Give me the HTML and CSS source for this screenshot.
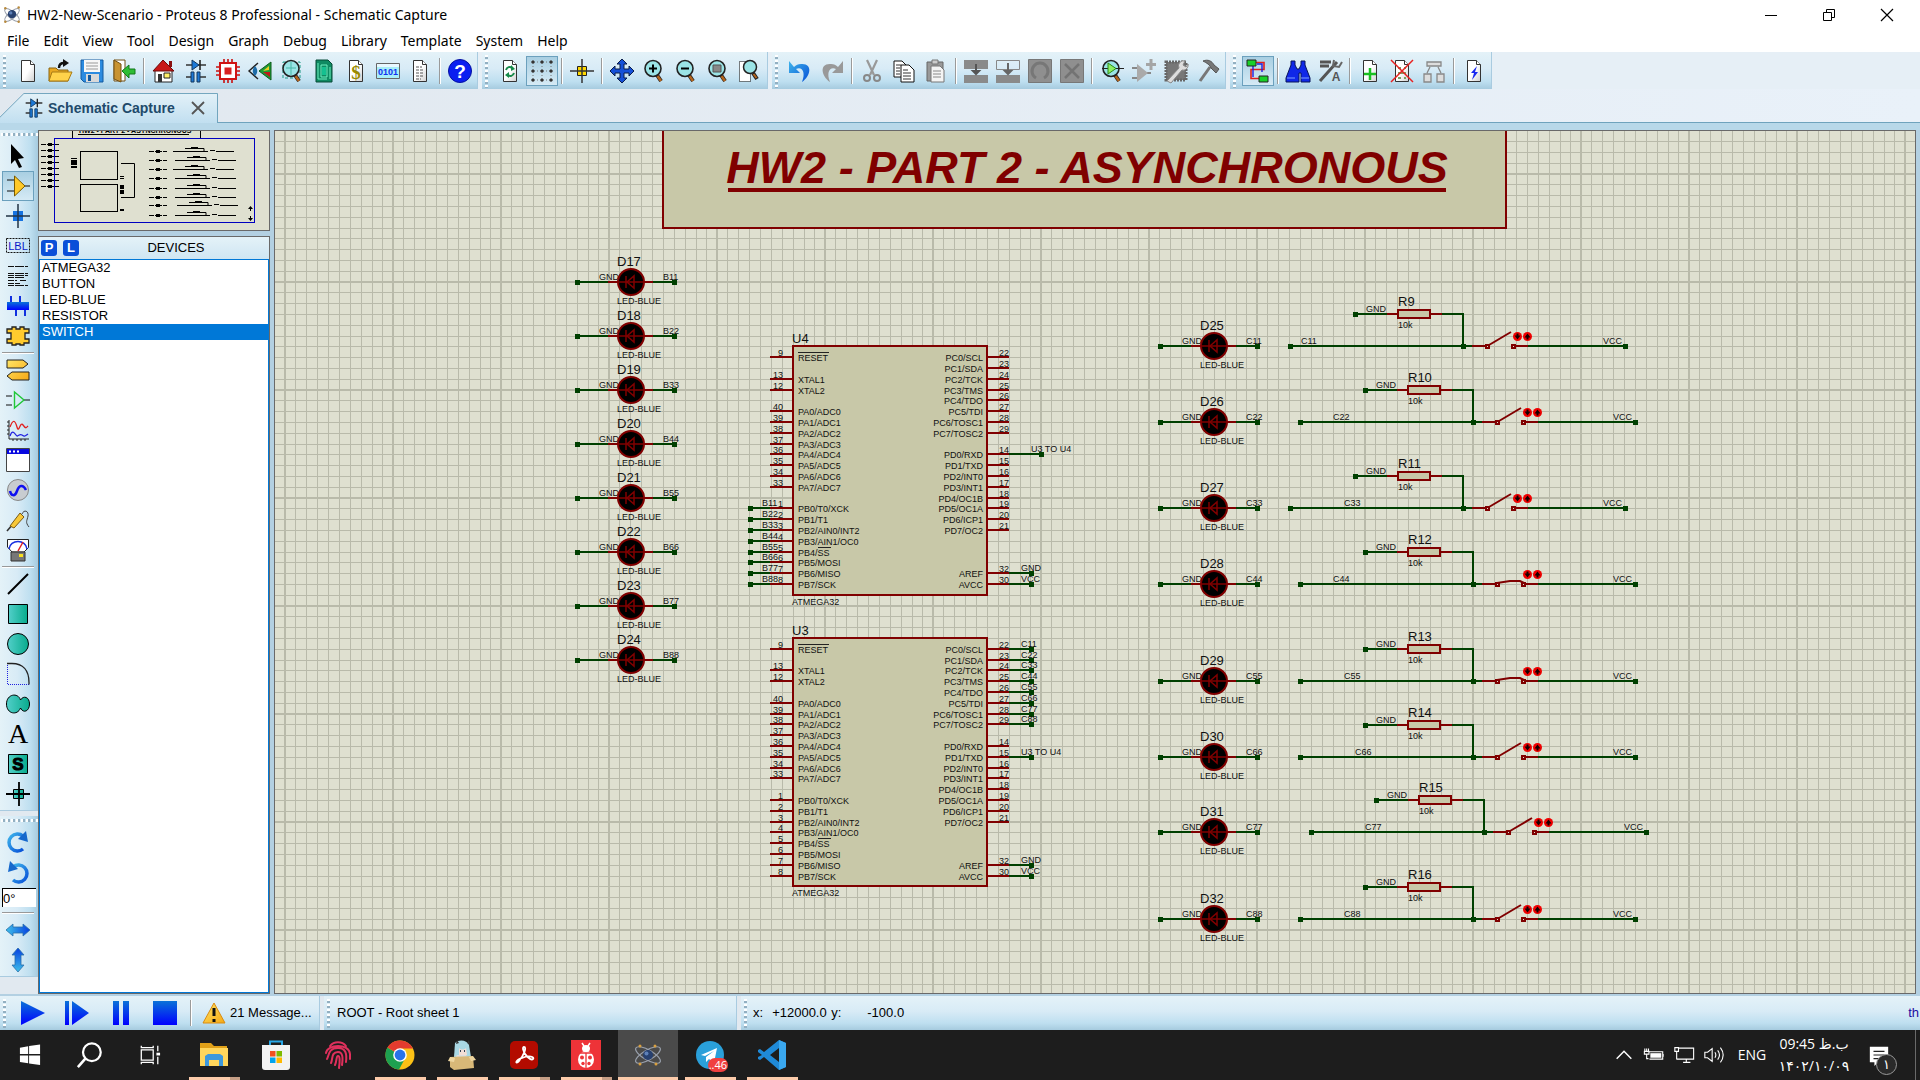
FILE: index.html
```html
<!DOCTYPE html>
<html lang="en">
<head>
<meta charset="utf-8">
<title>HW2-New-Scenario - Proteus 8 Professional - Schematic Capture</title>
<link rel="stylesheet" href="styles.css">
</head>
<body>
<svg class="defs" aria-hidden="true">
  <defs>
    <linearGradient id="blueDown" x1="0" y1="0" x2="0" y2="1"><stop offset="0" stop-color="#0a72d8"/><stop offset="1" stop-color="#0000ff"/></linearGradient>
    <linearGradient id="blueArc" x1="0" y1="0" x2="1" y2="1"><stop offset="0" stop-color="#3fb4ea"/><stop offset="1" stop-color="#0650d8"/></linearGradient>
    <linearGradient id="blueAcross" x1="0" y1="0" x2="1" y2="0"><stop offset="0" stop-color="#3fc0ea"/><stop offset="1" stop-color="#0640e0"/></linearGradient>
    <linearGradient id="blueUp" x1="0" y1="1" x2="0" y2="0"><stop offset="0" stop-color="#3fc0ea"/><stop offset="1" stop-color="#0640e0"/></linearGradient>
    <linearGradient id="teal" x1="0" y1="0" x2="1" y2="0"><stop offset="0" stop-color="#52cfc9"/><stop offset="1" stop-color="#08ab8d"/></linearGradient>
    <linearGradient id="gold" x1="0" y1="0" x2="1" y2="1"><stop offset="0" stop-color="#ffe566"/><stop offset="1" stop-color="#f5a814"/></linearGradient>
    <linearGradient id="paper" x1="0" y1="0" x2="1" y2="1"><stop offset="0.5" stop-color="#fff"/><stop offset="1" stop-color="#cfcfcf"/></linearGradient>
    <linearGradient id="tabFill" x1="0" y1="0" x2="0" y2="1"><stop offset="0" stop-color="#e3f1f8"/><stop offset="1" stop-color="#c1dff0"/></linearGradient>
    <symbol id="sheet" viewBox="0 0 24 24"><path d="M5.500 1.500h9l4 4v17h-13z" fill="url(#paper)" stroke="#333"/><path d="M14.500 1.500v4h4" fill="#fff" stroke="#333"/></symbol>
    <symbol id="lens" viewBox="0 0 24 24"><path d="M15 16l4 6" stroke="#222" stroke-width="4"/><path d="M15.500 17l3.500 5" stroke="#b5651d" stroke-width="2.500"/><circle cx="11" cy="9.500" r="8" fill="#9be4e6" stroke="#222" stroke-width="1.600"/></symbol>
    <symbol id="caps" viewBox="0 0 24 24"><path d="M2 6h20M2 18h6M16 18h6" stroke="#333" stroke-width="1.600"/><path d="M8 1v10l7-5z" fill="#1b78d6" stroke="#12365c"/><path d="M16 1v10" stroke="#222" stroke-width="1.600"/><path d="M7 13h3v10H7zM13 13h3v10h-3z" fill="#1b78d6" stroke="#12365c"/></symbol>
    <symbol id="atom" viewBox="0 0 24 24"><g fill="none" stroke="#9aa1ad" stroke-width="1.200"><ellipse cx="12" cy="12" rx="11" ry="4" transform="rotate(40 12 12)"/><ellipse cx="12" cy="12" rx="11" ry="4" transform="rotate(-40 12 12)"/></g><circle cx="12" cy="11" r="5" fill="#27406f"/><circle cx="10.500" cy="9.500" r="2" fill="#5d80b8"/><g fill="#b98a3c"><circle cx="4" cy="4" r="1.500"/><circle cx="20" cy="3" r="1.500"/><circle cx="4" cy="20" r="1.500"/><circle cx="20" cy="20" r="1.500"/></g></symbol>
  </defs>
</svg>

<div class="app">
  <header class="titlebar">
    <svg class="app-icon" viewBox="0 0 24 24"><use href="#atom"/></svg>
    <h1>HW2-New-Scenario - Proteus 8 Professional - Schematic Capture</h1>
    <div class="window-buttons">
      <button type="button" aria-label="Minimize"><svg viewBox="0 0 14 14"><path d="M1 7.500h12" stroke="#000"/></svg></button>
      <button type="button" aria-label="Restore"><svg viewBox="0 0 14 14"><path d="M1.500 4.500h8v8h-8zM4.500 4v-2.500h8v8H10" fill="none" stroke="#000"/></svg></button>
      <button type="button" aria-label="Close"><svg viewBox="0 0 14 14"><path d="M1 1l12 12M13 1L1 13" stroke="#000" stroke-width="1.200"/></svg></button>
    </div>
  </header>

  <nav class="menubar" aria-label="Menu">
    <button type="button">File</button><button type="button">Edit</button><button type="button">View</button><button type="button">Tool</button><button type="button">Design</button><button type="button">Graph</button><button type="button">Debug</button><button type="button">Library</button><button type="button">Template</button><button type="button">System</button><button type="button">Help</button>
  </nav>

  <div class="toolbars">
    <div class="toolbar" role="toolbar" aria-label="File">
      <button type="button" aria-label="New"><svg viewBox="0 0 24 24"><use href="#sheet"/></svg></button>
      <button type="button" aria-label="Open"><svg viewBox="0 0 24 24"><path d="M1 9h7l2 2h10v11H1z" fill="#e8a820" stroke="#8a6412"/><path d="M4 13h20l-4 9H1z" fill="#ffd24a" stroke="#a87a14"/><path d="M11 9c0-4 2-5 5-5" fill="none" stroke="#111" stroke-width="2.400"/><path d="M15 0l6 4-6 4z" fill="#111"/></svg></button>
      <button type="button" aria-label="Save"><svg viewBox="0 0 24 24"><path d="M1 1h22v22H4l-3-3z" fill="#2c8be0" stroke="#12599e"/><path d="M4 1h16v12H4z" fill="#f7f7f7"/><path d="M6 4h12M6 7h12M6 10h12" stroke="#999"/><path d="M6 15h13v8H6z" fill="#d9d9d9"/><path d="M8 16h3v6H8z" fill="#12599e"/></svg></button>
      <button type="button" aria-label="Close project"><svg viewBox="0 0 24 24"><path d="M2 1h11v21H2z" fill="#fff" stroke="#735015"/><path d="M2 1l7 4v18l-7-3z" fill="#c89332" stroke="#735015"/><path d="M10 12l7-6v4h6v5h-6v4z" fill="#2ebd35" stroke="#12781a"/></svg></button>
      <span class="sep"></span>
      <button type="button" aria-label="Home"><svg viewBox="0 0 24 24"><path d="M3 11h17v12H3z" fill="#fff" stroke="#222"/><path d="M17 2h3v6h-3z" fill="#8a1010"/><path d="M11 1L1 12h21z" fill="#c81818" stroke="#6b0a0a"/><path d="M6 15h4v8H6z" fill="#333"/><path d="M12 14h6v5h-6z" fill="#fff06a" stroke="#222"/></svg></button>
      <button type="button" aria-label="Schematic"><svg viewBox="0 0 24 24"><use href="#caps"/></svg></button>
      <button type="button" aria-label="PCB layout"><svg viewBox="0 0 24 24"><path d="M8 0v24M12 0v24M16 0v24M0 8h24M0 12h24M0 16h24" stroke="#c81010" stroke-width="1.600"/><path d="M4 4h16v16H4z" fill="#fff" stroke="#d01414" stroke-width="2"/><path d="M8.500 8.500h7v7h-7z" fill="#d82020"/></svg></button>
      <button type="button" aria-label="3D visualizer"><svg viewBox="0 0 24 24"><path d="M10 4L1 12l9 8" fill="none" stroke="#222" stroke-width="1.400"/><path d="M7 7c3 3 3 7 0 10-3-3-3-7 0-10z" fill="#1d6ca8"/><path d="M11 12L23 3v18z" fill="#1d9a36" stroke="#0c5a1a"/><path d="M15 12l6-5v4z" fill="#e8d020"/><path d="M15 13l7 5v-5z" fill="#c01818"/></svg></button>
      <button type="button" aria-label="Gerber viewer"><svg viewBox="0 0 24 24"><path d="M3 3h17v16H3z" fill="none" stroke="#1d9a86" stroke-dasharray="3 2"/><use href="#lens"/><path d="M6 9h10M11 3v13" stroke="#48b8a8"/></svg></button>
      <button type="button" aria-label="Design explorer"><svg viewBox="0 0 24 24"><path d="M4 1h12l4 4v18H4z" fill="#0f8a62" stroke="#064a36"/><path d="M9 6h6v12H9zM6 4v16M18 8v12M6 20h9" fill="none" stroke="#6ff0c0"/><path d="M10 8h4v8h-4z" fill="#14c090"/></svg></button>
      <button type="button" aria-label="Bill of materials"><svg viewBox="0 0 24 24"><use href="#sheet"/><text x="12" y="20" class="glyph dollar">$</text></svg></button>
      <button type="button" aria-label="Source code"><svg viewBox="0 0 24 24"><path d="M0.500 4.500h23v15H.5z" fill="#a8eef8" stroke="#666"/><path d="M1 5h22v3H1z" fill="#e8f8ff"/><text x="12" y="16" class="glyph bits">0101</text></svg></button>
      <button type="button" aria-label="Project notes"><svg viewBox="0 0 24 24"><use href="#sheet"/><path d="M8 8h6M8 11h8M8 14h8M8 17h8M8 20h5" stroke="#555" stroke-dasharray="3 1"/></svg></button>
      <span class="sep"></span>
      <button type="button" aria-label="Help"><svg viewBox="0 0 24 24"><circle cx="12" cy="12" r="11.500" fill="#0a1ff0" stroke="#0410a0"/><text x="12" y="19" class="glyph help">?</text></svg></button>
    </div>
    <div class="toolbar" role="toolbar" aria-label="View">
      <button type="button" aria-label="Redraw"><svg viewBox="0 0 24 24"><use href="#sheet"/><path d="M8 11c1-3 4-4 6-2M16 14c-1 3-4 4-6 2" fill="none" stroke="#178a4a" stroke-width="2"/><path d="M13 6l4 4-4 2zM11 13l-4 3 4 3z" fill="#178a4a"/></svg></button>
      <button type="button" class="on" aria-label="Grid"><svg viewBox="0 0 24 24"><path d="M1 3h22M1 12h22M1 21h22M3 1v22M12 1v22M21 1v22" stroke="#777" stroke-dasharray="1 2"/><g fill="#333"><circle cx="3" cy="3" r="1.600"/><circle cx="12" cy="3" r="1.600"/><circle cx="21" cy="3" r="1.600"/><circle cx="3" cy="12" r="1.600"/><circle cx="12" cy="12" r="1.600"/><circle cx="21" cy="12" r="1.600"/><circle cx="3" cy="21" r="1.600"/><circle cx="12" cy="21" r="1.600"/><circle cx="21" cy="21" r="1.600"/></g></svg></button>
      <span class="sep"></span>
      <button type="button" aria-label="Origin"><svg viewBox="0 0 24 24"><path d="M7.500 7.500h9v9h-9z" fill="#ffd800" stroke="#222"/><path d="M0 12h24M12 0v24" stroke="#333" stroke-width="1.500"/></svg></button>
      <span class="sep"></span>
      <button type="button" aria-label="Pan"><svg viewBox="0 0 24 24"><path d="M12 0l5 5h-3v5h5V7l5 5-5 5v-3h-5v5h3l-5 5-5-5h3v-5H5v3l-5-5 5-5v3h5V5H7z" fill="#1550d8" stroke="#0a1c48"/></svg></button>
      <button type="button" aria-label="Zoom in"><svg viewBox="0 0 24 24"><use href="#lens"/><path d="M7 9.500h8M11 5.500v8" stroke="#000" stroke-width="2"/></svg></button>
      <button type="button" aria-label="Zoom out"><svg viewBox="0 0 24 24"><use href="#lens"/><path d="M7 9.500h8" stroke="#000" stroke-width="2"/></svg></button>
      <button type="button" aria-label="Zoom all"><svg viewBox="0 0 24 24"><use href="#lens"/><path d="M7 6h8v7H7z" fill="#888" stroke="#555"/></svg></button>
      <button type="button" aria-label="Zoom area"><svg viewBox="0 0 24 24"><path d="M1.500 2.500h11v20h-11z" fill="#fff" stroke="#000" stroke-dasharray="1 1"/><path d="M15 14l4 6" stroke="#222" stroke-width="4"/><path d="M15.500 15l3 4" stroke="#b5651d" stroke-width="2"/><circle cx="12" cy="8" r="6.500" fill="#9be4e6" stroke="#222" stroke-width="1.500"/></svg></button>
    </div>
    <div class="toolbar" role="toolbar" aria-label="Edit">
      <button type="button" aria-label="Undo"><svg viewBox="0 0 24 24"><path d="M1 2v12h11L8 10c6-3 10 3 6 13 9-6 11-19-1-18-3 0-5 1-7 3z" fill="url(#blueArc)"/></svg></button>
      <button type="button" aria-label="Redo"><svg viewBox="0 0 24 24"><path d="M23 2v12H12l4-4c-6-3-10 3-6 13-9-6-11-19 1-18 3 0 5 1 7 3z" fill="#999"/></svg></button>
      <span class="sep"></span>
      <button type="button" aria-label="Cut"><svg viewBox="0 0 24 24"><path d="M7 1l7 15M17 1l-7 15" stroke="#999" stroke-width="2.200"/><circle cx="7" cy="19" r="3" fill="none" stroke="#888" stroke-width="2"/><circle cx="17" cy="19" r="3" fill="none" stroke="#888" stroke-width="2"/></svg></button>
      <button type="button" aria-label="Copy"><svg viewBox="0 0 24 24"><path d="M2 2h8l4 4v12H2z" fill="#fff" stroke="#111"/><path d="M9 6h8l5 5v12H9z" fill="#fff" stroke="#111"/><path d="M4 6h5M4 9h4M4 12h4M4 15h4M11 11h5M11 14h8M11 17h8M11 20h8" stroke="#333"/></svg></button>
      <button type="button" aria-label="Paste"><svg viewBox="0 0 24 24"><path d="M3 3h16v19H3z" fill="#999" stroke="#666"/><path d="M8 1h6v4H8z" fill="#ccc" stroke="#777"/><path d="M7 7h9l4 4v12H7z" fill="#f4f4f4" stroke="#777"/><path d="M9 12h8M9 15h8M9 18h8" stroke="#888"/></svg></button>
      <span class="sep"></span>
      <button type="button" aria-label="Block copy"><svg viewBox="0 0 24 24"><path d="M0 1h24v9H0zM0 16h24v8H0z" fill="#8a8a8a"/><path d="M12 5v8M12 15l-3-3h6z" stroke="#555" fill="#555" stroke-width="2"/></svg></button>
      <button type="button" aria-label="Block move"><svg viewBox="0 0 24 24"><path d="M.5 1.500h23v9H.5z" fill="none" stroke="#888"/><path d="M0 16h24v8H0z" fill="#8a8a8a"/><path d="M12 4v9M12 15l-3-3h6z" stroke="#666" fill="#666" stroke-width="2"/></svg></button>
      <button type="button" aria-label="Block rotate"><svg viewBox="0 0 24 24"><path d="M.5.500h23v23H.5z" fill="#8f8f8f" stroke="#777"/><path d="M8 19a8 8 0 1 1 8 0" fill="none" stroke="#777" stroke-width="3"/></svg></button>
      <button type="button" aria-label="Block delete"><svg viewBox="0 0 24 24"><path d="M.5.500h23v23H.5z" fill="#8f8f8f" stroke="#777"/><path d="M5 5l14 14M19 5L5 19" stroke="#737373" stroke-width="2.500"/></svg></button>
      <span class="sep"></span>
      <button type="button" aria-label="Pick parts"><svg viewBox="0 0 24 24"><use href="#lens"/><path d="M2 9.500h22" stroke="#222"/><path d="M8 4v11l8-5.500z" fill="#8cf060" stroke="#2a8a1a"/></svg></button>
      <button type="button" aria-label="Make device"><svg viewBox="0 0 24 24"><path d="M0 9h5M0 19h5M15 14h4" stroke="#888" stroke-width="2"/><path d="M5 5v18l11-9z" fill="#aaa"/><path d="M19 0v11M14 5.500h10" stroke="#a5a5a5" stroke-width="3"/></svg></button>
      <button type="button" aria-label="Packaging tool"><svg viewBox="0 0 24 24"><path d="M2 3h20v18H2z" fill="#777" stroke="#666" stroke-width="3" stroke-dasharray="2 1"/><path d="M3 22L15 9a5 5 0 0 1 6-7l-2 4 3 2 2-3a5 5 0 0 1-6 6L7 24z" fill="#ddd" stroke="#888"/></svg></button>
      <button type="button" aria-label="Decompose"><svg viewBox="0 0 24 24"><path d="M14 8L4 22" stroke="#777" stroke-width="3"/><path d="M7 2c5-2 9 0 11 4l5 4-3 4-5-5c-1-3-4-5-8-7z" fill="#777" stroke="#555"/></svg></button>
    </div>
    <div class="toolbar" role="toolbar" aria-label="Design">
      <button type="button" class="on" aria-label="Wire autorouter"><svg viewBox="0 0 24 24"><path d="M10 3.500h8v7H5v9h8" fill="none" stroke="#e02020" stroke-width="1.600"/><path d="M7 7v11M11 5h5v8" fill="none" stroke="#2020e0" stroke-width="1.400"/><path d="M1 1h9v6H1zM13 17h9v6h-9z" fill="#18d028" stroke="#222"/></svg></button>
      <span class="sep"></span>
      <button type="button" aria-label="Search"><svg viewBox="0 0 24 24"><path d="M5 2h4v4l2 4h2l2-4V2h4v4l5 13v4h-9v-9h-2v9H0v-4L5 6z" fill="#1028e8" stroke="#08145a"/><path d="M1 19h8M15 19h8" stroke="#7fa0ff"/></svg></button>
      <button type="button" aria-label="Property assignment"><svg viewBox="0 0 24 24"><path d="M2 22L19 3M2 3h11M2 7h9" stroke="#555" stroke-width="3"/><path d="M16 1l-1 6 6 1 3-5" fill="none" stroke="#666" stroke-width="2"/><text x="18" y="22" class="glyph prop">A</text></svg></button>
      <span class="sep"></span>
      <button type="button" aria-label="New sheet"><svg viewBox="0 0 24 24"><use href="#sheet"/><path d="M12 9v12M6 15h12" stroke="#18c020" stroke-width="2.500"/></svg></button>
      <button type="button" aria-label="Remove sheet"><svg viewBox="0 0 24 24"><use href="#sheet"/><path d="M8 9h3M14 9h2M8 14h8M8 19h3M14 19h2" stroke="#7aa060" stroke-width="2"/><path d="M1 1l22 22M23 1L1 23" stroke="#e82020" stroke-width="1.500"/></svg></button>
      <button type="button" aria-label="Exit to parent"><svg viewBox="0 0 24 24"><path d="M5 3h14v4H5zM2 15h7v8H2zM15 15h7v8h-7zM8 8L5 14M16 8l3 6" fill="#ddd" stroke="#888" stroke-width="1.300"/></svg></button>
      <span class="sep"></span>
      <button type="button" aria-label="Electrical rules check"><svg viewBox="0 0 24 24"><use href="#sheet"/><path d="M15 7l-6 7h3l-2 7 6-8h-3z" fill="#1828f0"/></svg></button>
    </div>
  </div>

  <div class="tabs">
    <div class="tab">
      <svg class="tab-shape" viewBox="0 0 220 31" preserveAspectRatio="none" aria-hidden="true"><path d="M0 25L24 .5h194.500V31H0z" fill="url(#tabFill)"/><path d="M0 25L24 .5h194.500V31" fill="none" stroke="#6fa3bd"/></svg>
      <svg class="tab-icon" viewBox="0 0 24 24"><use href="#caps"/></svg>
      <span>Schematic Capture</span>
      <button type="button" aria-label="Close tab"><svg viewBox="0 0 14 14"><path d="M1 1l12 12M13 1L1 13" stroke="#555" stroke-width="1.800"/></svg></button>
    </div>
  </div>

  <main class="workspace">
    <aside class="modes">
      <div class="modebar" role="toolbar" aria-label="Modes">
        <button type="button" aria-label="Selection"><svg viewBox="0 0 24 24"><path d="M5 0v20l4-4 4 8 3-1-4-8 6-1z" fill="#000"/></svg></button>
        <button type="button" class="on" aria-label="Component"><svg viewBox="0 0 24 24"><path d="M1 6h7M1 17h7M18 12h6" stroke="#111" stroke-width="1.200"/><path d="M8.500 2v20L19 12z" fill="#ffc928" stroke="#7a5a00"/></svg></button>
        <button type="button" aria-label="Junction"><svg viewBox="0 0 24 24"><path d="M7 7h10v10H7z" fill="#1572e0"/><path d="M0 12h24M12 0v24" stroke="#234" stroke-width="1.500"/></svg></button>
        <button type="button" aria-label="Label"><svg viewBox="0 0 24 24"><path d="M.5 4.500h23v14H.5z" fill="none" stroke="#111" stroke-dasharray="2 1"/><text x="12" y="16" class="glyph lbl">LBL</text></svg></button>
        <button type="button" aria-label="Text script"><svg viewBox="0 0 24 24"><path d="M2 2.500h20M2 9.500h20M2 11.500h20M2 13.500h16M2 16.500h9M14 16.500h7M2 19.500h12M2 21.500h20" stroke="#111" stroke-dasharray="6 1 9 1"/></svg></button>
        <button type="button" aria-label="Bus"><svg viewBox="0 0 24 24"><path d="M5 2v8M14 2v8M10 14v8M19 14v8" stroke="#1030e0" stroke-width="2"/><path d="M1 8h22v8H1z" fill="url(#blueDown)"/></svg></button>
        <button type="button" aria-label="Subcircuit"><svg viewBox="0 0 24 24"><path d="M6 3h4v2h4V3h4v2h5v4h-4v6h4v4h-5v2h-4v-1h-4v1H6v-2H1v-4h4V9H1V5h5z" fill="#ffcb2e" stroke="#222" stroke-width="1.300"/></svg></button>
        <span class="rule"></span>
        <button type="button" aria-label="Terminal"><svg viewBox="0 0 24 24"><path d="M1 2h16l5 4-5 4H1zM23 14H6l-5 4 5 4h17z" fill="url(#gold)" stroke="#222"/></svg></button>
        <button type="button" aria-label="Device pin"><svg viewBox="0 0 24 24"><path d="M0 8h6M0 17h6M18 12h6" stroke="#111" stroke-width="1.200"/><path d="M8.500 4v16L18 12z" fill="none" stroke="#20c838" stroke-width="1.400"/></svg></button>
        <button type="button" aria-label="Graph"><svg viewBox="0 0 24 24"><path d="M3 2v19h20M1 4h2M1 8h2M1 12h2M1 16h2M7 21v2M11 21v2M15 21v2M19 21v2" fill="none" stroke="#222"/><path d="M4 9c3-8 5-7 7 0s3-6 6-2 3 3 5 1" fill="none" stroke="#e02020" stroke-width="1.300"/><path d="M4 18c2-6 4-4 6-1s3-2 6 0 3 1 6-1" fill="none" stroke="#2020e0" stroke-width="1.300"/></svg></button>
        <button type="button" aria-label="Active popup"><svg viewBox="0 0 24 24"><path d="M.5.500h23v23H.5z" fill="#fff" stroke="#444"/><path d="M1 1h22v5H1z" fill="#0808e0"/><path d="M3 3.500h2M7 3.500h2M11 3.500h2" stroke="#fff" stroke-width="2"/></svg></button>
        <button type="button" aria-label="Generator"><svg viewBox="0 0 24 24"><circle cx="12" cy="12" r="10.500" fill="#c8ccd0" stroke="#888"/><path d="M4 13c1 5 5 6 7 0s6-7 9-1" fill="none" stroke="#1010f0" stroke-width="2.500"/></svg></button>
        <button type="button" aria-label="Probe"><svg viewBox="0 0 24 24"><path d="M1 23l6-7" stroke="#333" stroke-width="1.600"/><path d="M4 18L14 5l4 4L8 20z" fill="#f8c838" stroke="#7a5a14"/><path d="M16 6c2-5 7-3 6 2s-3 6 1 11" fill="none" stroke="#444"/></svg></button>
        <button type="button" aria-label="Instrument"><svg viewBox="0 0 24 24"><path d="M1.500 1.500h21v8L18 14H6l-4.500-5z" fill="#fff" stroke="#222"/><path d="M3 11c1-10 17-10 18 0" fill="none" stroke="#1830e0" stroke-width="1.500"/><path d="M12 13l5-9" stroke="#e02020" stroke-width="1.500"/><path d="M5 14h14v9H5z" fill="#777" stroke="#333"/><path d="M13 16h4v3h-4z" fill="#f8e020"/></svg></button>
        <span class="rule"></span>
        <button type="button" aria-label="Line"><svg viewBox="0 0 24 24"><path d="M2 22L22 2" stroke="#000" stroke-width="2"/></svg></button>
        <button type="button" aria-label="Box"><svg viewBox="0 0 24 24"><path d="M2.500 2.500h19v19h-19z" fill="url(#teal)" stroke="#000"/></svg></button>
        <button type="button" aria-label="Circle"><svg viewBox="0 0 24 24"><circle cx="12" cy="12" r="10.500" fill="url(#teal)" stroke="#000"/></svg></button>
        <button type="button" aria-label="Arc"><svg viewBox="0 0 24 24"><path d="M1.500 1v21.500h22" fill="none" stroke="#2020e0" stroke-dasharray="1 1"/><path d="M1 1.500h5c11 0 17 7 17 19v2" fill="none" stroke="#222" stroke-width="1.300"/></svg></button>
        <button type="button" aria-label="Path"><svg viewBox="0 0 24 24"><path d="M14.500 8C12 0 .5 2 .5 12s11 12 14 4c3 6 9 3 9-4s-6-9-9-4z" fill="url(#teal)" stroke="#000"/></svg></button>
        <button type="button" aria-label="Text"><svg viewBox="0 0 24 24"><text x="12" y="21" class="glyph serif">A</text></svg></button>
        <button type="button" aria-label="Symbol"><svg viewBox="0 0 24 24"><path d="M2.500 2.500h19v19h-19z" fill="url(#teal)" stroke="#000"/><text x="12" y="18" class="glyph sym">S</text></svg></button>
        <button type="button" aria-label="Marker"><svg viewBox="0 0 24 24"><path d="M7.500 7.500h10v9h-10z" fill="url(#teal)" stroke="#000"/><path d="M0 12h24M13 0v24" stroke="#000" stroke-width="1.800"/></svg></button>
      </div>
      <div class="modebar" role="toolbar" aria-label="Orientation">
        <button type="button" aria-label="Rotate clockwise"><svg viewBox="0 0 24 24"><path d="M17 19a8.500 8.500 0 1 1 0-13" fill="none" stroke="url(#blueArc)" stroke-width="3.500"/><path d="M20 1l2 11-10-3z" fill="#1668cc"/></svg></button>
        <button type="button" aria-label="Rotate anticlockwise"><svg viewBox="0 0 24 24"><path d="M7 20a8.500 8.500 0 1 0 0-13" fill="none" stroke="url(#blueArc)" stroke-width="3.500"/><path d="M4 1L2 12l10-3z" fill="#1668cc"/></svg></button>
        <input type="text" value="0°" aria-label="Angle">
        <span class="rule"></span>
        <button type="button" aria-label="Mirror horizontally"><svg viewBox="0 0 24 24"><path d="M0 12l7-6v3h10V6l7 6-7 6v-3H7v3z" fill="url(#blueAcross)" stroke="#2a6fa8" stroke-width=".8"/></svg></button>
        <button type="button" aria-label="Mirror vertically"><svg viewBox="0 0 24 24"><path d="M12 0l6 7h-3v10h3l-6 7-6-7h3V7H6z" fill="url(#blueUp)" stroke="#2a6fa8" stroke-width=".8"/></svg></button>
      </div>
    </aside>

    <section class="selector">
      <div class="overview"><svg id="overview" viewBox="0 0 230 99" role="img" aria-label="Sheet overview"></svg></div>
      <div class="devices">
        <div class="devices-head">
          <button type="button">P</button><button type="button">L</button>
          <h2>DEVICES</h2>
        </div>
        <ul role="listbox" aria-label="Devices">
          <li role="option">ATMEGA32</li>
          <li role="option">BUTTON</li>
          <li role="option">LED-BLUE</li>
          <li role="option">RESISTOR</li>
          <li role="option" class="selected" aria-selected="true">SWITCH</li>
        </ul>
      </div>
    </section>

    <section class="sheet"><svg id="schematic" role="img" aria-label="Schematic sheet"></svg></section>
  </main>

  <footer class="statusbar">
    <div class="status-group sim">
      <button type="button" aria-label="Play"><svg viewBox="0 0 24 24"><path d="M0 0l24 12L0 24z" fill="url(#blueDown)"/></svg></button>
      <button type="button" aria-label="Step"><svg viewBox="0 0 24 24"><path d="M0 0h4v24H0zM7 0l17 12L7 24z" fill="url(#blueDown)"/></svg></button>
      <button type="button" aria-label="Pause"><svg viewBox="0 0 24 24"><path d="M4 0h6v24H4zM14 0h6v24h-6z" fill="url(#blueDown)"/></svg></button>
      <button type="button" aria-label="Stop"><svg viewBox="0 0 24 24"><path d="M0 0h24v24H0z" fill="url(#blueDown)"/></svg></button>
      <span class="sep"></span>
      <button type="button" class="messages"><svg viewBox="0 0 24 24"><path d="M12 2l11 20H1z" fill="url(#gold)" stroke="#d98a10"/><path d="M12 7v8M12 18v3" stroke="#111" stroke-width="3"/></svg>21 Message...</button>
    </div>
    <div class="status-group path">ROOT - Root sheet 1</div>
    <div class="status-group coords"><span>x:</span><output class="cx">+12000.0</output><span>y:</span><output class="cy">-100.0</output><span class="unit">th</span></div>
  </footer>
</div>

<div class="taskbar">
  <div class="system">
    <button type="button" aria-label="Start"><svg viewBox="0 0 24 24" class="small"><path d="M1 4l9-1.500V11H1zM11 2.300L23 .5V11H11zM1 12.500h9V21l-9-1.500zM11 12.500h12V23l-12-1.800z" fill="#fff"/></svg></button>
    <button type="button" aria-label="Search"><svg viewBox="0 0 30 30"><circle cx="17" cy="12" r="9.500" fill="none" stroke="#fff" stroke-width="2.400"/><path d="M10 19L2 28" stroke="#fff" stroke-width="2.800"/></svg></button>
    <button type="button" aria-label="Task view"><svg viewBox="0 0 24 24" class="small"><path d="M2.500 6.500h13v11h-13zM2.500 2v2h13V2M2.500 22v-2h13v2M20.500 2v6M20.500 14v8" fill="none" stroke="#fff" stroke-width="1.400"/><path d="M19 9.500h4v3h-4z" fill="#fff"/></svg></button>
  </div>
  <div class="programs">
    <button type="button" class="open many" aria-label="File Explorer"><svg viewBox="0 0 30 30"><path d="M1 3h11l3 3h13v6H1z" fill="#e0a018"/><path d="M1 8h28v18H1z" fill="#ffd65c"/><path d="M6 26V16l3-2h12l3 2v10h-4v-6H10v6z" fill="#3d98dc"/></svg></button>
    <button type="button" aria-label="Microsoft Store"><svg viewBox="0 0 30 30"><path d="M9 5V1.500h12V5" fill="none" stroke="#28a8e8" stroke-width="2"/><path d="M1 5h28v22q0 3-3 3H4q-3 0-3-3z" fill="#f2f2f2"/><path d="M9 11h5.500v5.500H9z" fill="#f25022"/><path d="M15.500 11H21v5.500h-5.500z" fill="#7fba00"/><path d="M9 17.500h5.500V23H9z" fill="#00a4ef"/><path d="M15.500 17.500H21V23h-5.500z" fill="#ffb900"/></svg></button>
    <button type="button" aria-label="Fingerprint"><svg viewBox="0 0 30 30"><g fill="none" stroke="#e0305c" stroke-width="2" stroke-linecap="round"><path d="M7 6C11 1 19 1 23 6M3 13c1-9 23-10 24 1v5M4 19c2-3 1-11 11-11 8 0 9 6 8 14M8 23c2-4 0-11 7-11 5 0 5 6 4 13M12 25c2-4 1-9 3-9s2 5 1 12"/></g></svg></button>
    <button type="button" class="open" aria-label="Chrome"><svg viewBox="0 0 30 30"><circle cx="15" cy="15" r="14.500" fill="#fbc116"/><path d="M15 15L2.500 7.500A14.500 14.500 0 0 0 14 29.500l6-11z" fill="#1da050"/><path d="M15 15L2.500 7.500A14.500 14.500 0 0 1 28 8.500H15z" fill="#e33b2e"/><circle cx="15" cy="15" r="6.800" fill="#fff"/><circle cx="15" cy="15" r="5.400" fill="#2a72e8"/></svg></button>
    <button type="button" class="open" aria-label="Character in a box"><svg viewBox="0 0 30 30"><path d="M8 3c4-4 12-3 14 2l2 12H7z" fill="#a9d8e4"/><path d="M12 8c2 2 5 2 7 0l1 7h-8z" fill="#f2ded6"/><path d="M13 10h1v2h-1zM17 10h1v2h-1z" fill="#345"/><path d="M9 4l1-4 2 3M20 3l2-3 1 5" fill="#333"/><path d="M10 15h9l2 3H8z" fill="#ddd"/><path d="M3 17l23-1 1 12-20 2-4-3z" fill="#d8b878"/><path d="M3 17l-2 4 6 1 1-4M26 16l3 4-5 1-2-4" fill="#eed6a0"/></svg></button>
    <button type="button" class="open many" aria-label="Acrobat"><svg viewBox="0 0 30 30"><rect x="1" y="1" width="28" height="28" rx="5" fill="#b30b00"/><path d="M15 7c3 0 0 8-5 14-4 4-4-1 3-3 7-3 13-1 11 1s-9-4-10-10q0-2 1-2z" fill="none" stroke="#fff" stroke-width="1.800"/></svg></button>
    <button type="button" class="open many" aria-label="Bug tool"><svg viewBox="0 0 30 30"><path d="M0 0h30v30H0z" fill="#ee3338"/><path d="M11 3l2 3M19 3l-2 3" stroke="#fff" stroke-width="1.500"/><ellipse cx="15" cy="8.500" rx="4" ry="3.500" fill="#fff"/><ellipse cx="15" cy="19.500" rx="8" ry="8.500" fill="#fff"/><path d="M15 13v15M8 13h14" stroke="#ee3338" stroke-width="1.300"/><g fill="#ee3338"><circle cx="11" cy="17.500" r="2"/><circle cx="19" cy="17.500" r="2"/><circle cx="12" cy="23.500" r="1.700"/><circle cx="18" cy="23.500" r="1.700"/></g></svg></button>
    <button type="button" class="open active" aria-label="Proteus"><svg viewBox="0 0 30 30"><g fill="none" stroke="#9aa1ad" stroke-width="1.200"><ellipse cx="15" cy="15" rx="14" ry="5" transform="rotate(30 15 15)"/><ellipse cx="15" cy="15" rx="14" ry="5" transform="rotate(-30 15 15)"/></g><circle cx="15" cy="15" r="5" fill="#27406f"/><circle cx="13.500" cy="13.500" r="2" fill="#5d80b8"/><g fill="#d9a040"><circle cx="7" cy="6" r="1.500"/><circle cx="22" cy="6" r="1.500"/><circle cx="7" cy="24" r="1.500"/><circle cx="23" cy="24" r="1.500"/></g></svg></button>
    <button type="button" class="open" aria-label="Telegram"><svg viewBox="0 0 30 30"><circle cx="15" cy="15" r="14" fill="#2aa0da"/><path d="M6 15l16-7-3 15-5-4-3 3v-5l8-6-9 5z" fill="#fff"/></svg><span class="badge">..46</span></button>
    <button type="button" class="open" aria-label="Visual Studio Code"><svg viewBox="0 0 30 30"><path d="M22 0l7 3v24l-7 3L7 17l-4 3-2-1v-2l4-2-4-3v-2l2-1 4 3zM22 8l-9 7 9 7z" fill="#1f8ad8" fill-rule="evenodd"/><path d="M22 0l7 3v24l-7 3z" fill="#3aa8f0"/></svg></button>
  </div>
  <div class="tray">
    <button type="button" aria-label="Show hidden icons"><svg viewBox="0 0 24 24"><path d="M4 16l8-8 8 8" fill="none" stroke="#fff" stroke-width="1.600"/></svg></button>
    <button type="button" aria-label="Battery"><svg viewBox="0 0 24 24"><path d="M6 8.500h15.500v8H7M22 11v3M4 5v3M1.500 8h5v3h-5zM4 11v5h2M2 5v3M6 5v3" fill="none" stroke="#fff" stroke-width="1.200"/><path d="M8 10h12v5H8z" fill="#fff"/></svg></button>
    <button type="button" aria-label="Network"><svg viewBox="0 0 24 24"><path d="M6 4.500h16.500v12H4M11 20h8M14.500 17v3M2 4h4v4H2zM4 8v9" fill="none" stroke="#fff" stroke-width="1.200"/></svg></button>
    <button type="button" aria-label="Volume"><svg viewBox="0 0 24 24"><path d="M2 9h3l5-4v14l-5-4H2zM13 9q2 3 0 6M16 7q4 5 0 10M19 4q6 8 0 16" fill="none" stroke="#fff" stroke-width="1.200"/></svg></button>
    <button type="button" class="lang">ENG</button>
    <button type="button" class="clock"><span>09:45 ب.ظ</span><span>۱۴۰۲/۱۰/۰۹</span></button>
    <button type="button" class="notify" aria-label="Notifications"><svg viewBox="0 0 24 24"><path d="M2 3h20v17H11l-4 4v-4H2z" fill="#fff"/><path d="M6 8h12M6 12h12M6 16h8" stroke="#222" stroke-width="1.300"/></svg><span class="count">۱</span></button>
  </div>
</div>
<script src="schematic.js"></script>
</body>
</html>
```
FILE: styles.css
```css
* { box-sizing: border-box; }

html, body { height: 100%; }

body {
  margin: 0;
  display: flex;
  flex-direction: column;
  overflow: hidden;
  background: #e3ebf2;
  color: #000;
  font: 13px/16px "Liberation Sans", Arial, sans-serif;
}

button {
  margin: 0;
  padding: 0;
  border: 0;
  background: none;
  color: inherit;
  font: inherit;
  display: flex;
  align-items: center;
  justify-content: center;
}

h1, h2, ul { margin: 0; padding: 0; font-weight: normal; list-style: none; }

.defs { position: absolute; width: 0; height: 0; }

.app { flex: 1; min-height: 0; display: flex; flex-direction: column; }

/* Title and menu */
.titlebar {
  display: flex;
  align-items: center;
  height: 30px;
  padding-left: 2px;
  background: #fff;
}
.titlebar h1 { flex: 1; padding-left: 5px; font: 14px/20px "Noto Sans", "Open Sans", sans-serif; }
.app-icon { width: 20px; height: 20px; }
.window-buttons { display: flex; padding-right: 4px; }
.window-buttons button { width: 58px; height: 30px; }
.window-buttons svg { width: 14px; height: 14px; }

.menubar {
  display: flex;
  height: 22px;
  background: #fff;
}
.menubar button { padding: 0 7px; font: 14px/20px "Noto Sans", "Open Sans", sans-serif; }

/* Toolbars */
.toolbars { display: flex; gap: 4px; height: 37px; background: #e6eff6; }
.toolbar, .status-group {
  position: relative;
  display: flex;
  align-items: center;
  padding: 0 1px 0 12px;
  border-right: 1px solid #a9cbe0;
  background: linear-gradient(#e4f2f8, #d8ebf6 45%, #bedff0 80%, #a6cbdf);
}
.toolbar::before, .status-group::before {
  content: "";
  position: absolute;
  inset: 3px auto 1px 3px;
  width: 3px;
  background: repeating-linear-gradient(#fff 0 2px, #93b0c2 2px 4px, transparent 4px 5px);
}
.toolbar button { width: 32px; height: 30px; border: 1px solid transparent; }
.toolbar button svg, .modebar button svg { width: 24px; height: 24px; flex: none; overflow: visible; }
.toolbar button.on, .modebar button.on {
  border: 1px solid #6ba0bd;
  background: linear-gradient(#a9cfe2, #d5eaf5);
}
.sep { width: 2px; height: 26px; margin: 0 3px; border-left: 1px solid #9a9a9a; border-right: 1px solid #fff; }

.glyph { text-anchor: middle; font-family: "Liberation Sans", Arial, sans-serif; }
.dollar { font: bold 19px "Liberation Serif", serif; fill: #9a8a00; }
.bits { font-size: 9px; font-weight: bold; fill: #1030f0; }
.help { font-size: 19px; font-weight: bold; fill: #fff; }
.prop { font-size: 12px; font-weight: bold; fill: #555; }
.lbl { font-size: 11px; fill: #0a18c8; }
.serif { font: 28px "Liberation Serif", serif; }
.sym { font-size: 17px; font-weight: bold; stroke: #000; }

/* Document tabs */
.tabs {
  height: 41px;
  padding-top: 4px;
  border-bottom: 7px solid #b8d8e9;
  background: linear-gradient(90deg, #e1e8ef, #e9f1f9);
  box-shadow: inset 0 -1px #6fa3bd;
}
.tab {
  position: relative;
  display: flex;
  align-items: center;
  width: 219px;
  height: 30px;
  padding-left: 24px;
  color: #1f4a6b;
  font-weight: bold;
  font-size: 14px;
}
.tab-shape { position: absolute; inset: 0; width: 100%; height: 100%; }
.tab-icon { position: relative; width: 20px; height: 20px; margin-right: 4px; }
.tab span { position: relative; }
.tab button { position: relative; margin-left: 16px; }
.tab button svg { width: 14px; height: 14px; }

/* Workspace */
.workspace {
  flex: 1;
  min-height: 0;
  display: flex;
  padding: 0 4px 2px 0;
  background: #b3d0e2;
}
.modes { display: flex; flex-direction: column; gap: 5px; width: 38px; background: #e1e9f0; }
.modebar {
  position: relative;
  display: flex;
  flex-direction: column;
  align-items: center;
  padding: 11px 2px 1px 0;
  border-bottom: 1px solid #a9cbe0;
  background: linear-gradient(90deg, #e4f2f8, #d8ebf6 45%, #bedff0 80%, #a6cbdf);
}
.modebar::before {
  content: "";
  position: absolute;
  inset: 3px 0 auto 1px;
  height: 3px;
  background: repeating-linear-gradient(90deg, #fff 0 2px, #93b0c2 2px 4px, transparent 4px 5px);
}
.modebar button { width: 32px; height: 30px; flex: none; border: 1px solid transparent; }
.rule { width: 32px; height: 2px; margin: 1px 0; flex: none; border-top: 1px solid #999; border-bottom: 1px solid #fff; }
.modebar input {
  width: 34px;
  height: 19px;
  margin: 1px 0 4px 2px;
  padding: 0;
  border: 0;
  border-top: 1px solid #000;
  border-left: 1px solid #000;
  background: #fff;
  font: 13px/16px "Liberation Sans", Arial, sans-serif;
}

.selector { display: flex; flex-direction: column; gap: 5px; width: 232px; }
.overview { height: 101px; border: 1px solid #696969; background: #dfe0d0; }
.overview svg { display: block; width: 100%; height: 100%; }
.mini line, .mini path, .mini rect { fill: none; stroke: #000; }
.mini .solid { fill: #000; stroke: none; }
.mini .view { stroke: #0000c0; }
.mini-title { font: bold 7px "Liberation Sans", Arial, sans-serif; }

.devices { flex: 1; min-height: 0; display: flex; flex-direction: column; border: 1px solid #696969; background: #fff; }
.devices-head {
  display: flex;
  align-items: center;
  gap: 6px;
  height: 22px;
  padding-left: 2px;
  background: linear-gradient(#e4f2f8, #cfe6f3);
}
.devices-head button { width: 16px; height: 16px; border-radius: 3px; background: #0a4fd8; color: #fff; font-weight: bold; }
.devices-head h2 { flex: 1; padding-right: 2px; text-align: center; font-size: 13px; }
.devices ul { flex: 1; border: 1px solid #0078d7; }
.devices li { padding-left: 2px; }
.devices .selected { background: #0078d7; color: #fff; }

.sheet {
  flex: 1;
  min-width: 0;
  margin-left: 4px;
  border: 1px solid #696969;
  background: #dfe0d0;
}
.sheet svg { display: block; width: 100%; height: 100%; }

/* Schematic drawing */
.grid-minor, .grid-major { fill: #b9baaa; }
.wire { fill: none; stroke: #004000; stroke-width: 2; }
.node { fill: #004000; }
.pin { fill: none; stroke: #800000; stroke-width: 2; }
.thin { fill: none; stroke: #800000; stroke-width: 1; }
.diode { fill: none; stroke: #800000; stroke-width: 1.5; }
.body { fill: #c8c8a8; stroke: #800000; stroke-width: 2; }
.led { fill: #000; stroke: #800000; stroke-width: 2; }
.contact { fill: #dfe0d0; stroke: #800000; stroke-width: 2; }
.actuator { fill: #f00000; }
.arrow { fill: #180000; }
.bar { stroke: #222; stroke-width: 1; }
.ref, .txt { font-family: "Liberation Sans", Arial, sans-serif; fill: #101010; }
.ref { font-size: 13px; }
.txt { font-size: 9px; }
.end { text-anchor: end; }
.banner { font: italic bold 45px "Liberation Sans", Arial, sans-serif; fill: #800000; text-anchor: middle; }
.banner-rule { fill: #800000; }

/* Status bar */
.statusbar { display: flex; gap: 4px; height: 34px; background: #e1e9f0; }
.sim { width: 320px; padding-left: 11px; }
.sim button { width: 44px; height: 30px; }
.sim svg { width: 24px; height: 24px; }
.sim .messages { width: auto; gap: 4px; padding-left: 7px; }
.path { width: 413px; padding-left: 13px; }
.coords { flex: 1; border: 0; }
.coords .cx { width: 59px; margin-left: 9px; }
.coords .cy { margin-left: 26px; }
.coords .unit { margin-left: auto; color: #1a0aa0; }

/* Taskbar */
.taskbar { display: flex; height: 50px; background: #1d1d1d; color: #fff; }
.system { display: flex; padding-right: 4px; }
.programs { display: flex; gap: 2px; flex: 1; }
.taskbar button { position: relative; height: 50px; }
.system button, .programs button { width: 60px; }
.system svg { width: 28px; height: 28px; }
.programs svg { width: 30px; height: 30px; }
.system svg.small { width: 22px; height: 22px; }
.programs .open::after {
  content: "";
  position: absolute;
  inset: auto 4px 0 5px;
  height: 3px;
  background: #fccbaa;
}
.programs .many::after { background: linear-gradient(90deg, #fccbaa 41px, #c69f86 41px); }
.programs .active { background: #4a4a4a; }
.programs .active::after { inset: auto 0 0 0; }
.badge {
  position: absolute;
  right: 12px;
  bottom: 8px;
  padding: 0 1px;
  border-radius: 7px;
  background: #f04040;
  font: 11px/14px "Open Sans", sans-serif;
}
.tray {
  display: flex;
  align-items: center;
  margin-right: 4px;
  padding-right: 10px;
  border-right: 1px solid #6a6a6a;
}
.tray > button { width: 30px; }
.tray svg { width: 22px; height: 22px; }
.tray .lang { width: 46px; font: 14px/20px "Open Sans", "Noto Sans", sans-serif; }
.tray .clock { flex-direction: column; width: 78px; font: 14px/22px "Open Sans", "DejaVu Sans", sans-serif; }
.tray .notify { width: 52px; }
.count {
  position: absolute;
  right: 8px;
  bottom: 5px;
  width: 21px;
  height: 21px;
  border: 1px solid #999;
  border-radius: 50%;
  background: #2a2a2a;
  font: 13px/19px "DejaVu Sans", sans-serif;
  text-align: center;
}
```
FILE: schematic.js
```js
// Sheet coordinates; PAN moves the visible part of the sheet to the view's corner.
const PAN = { x: 275, y: 131 };
const PITCH = 10.8;
const gridY = n => 390 + Math.floor(PITCH * n);

const line = (cls, ...p) => `<path class="${cls}" d="M${p[0]} ${p[1]}L${p.slice(2).join(" ")}"/>`;
const text = (cls, x, y, s) => `<text class="${cls}" x="${x}" y="${y}">${s}</text>`;
const node = (x, y) => `<rect class="node" x="${x - 3}" y="${y - 2}" width="5" height="5"/>`;

function grid() {
  const xs = [10, 21, 32, 43, 54, 65, 76, 87, 97];
  const ys = [10, 21, 32, 43, 54, 64, 75, 86, 97];
  let s = `<pattern id="grid" x="285" y="174" width="108" height="108" patternUnits="userSpaceOnUse">`;
  xs.forEach(x => s += `<rect class="grid-minor" x="${x}" width="1" height="108"/>`);
  ys.forEach(y => s += `<rect class="grid-minor" y="${y}" width="108" height="1"/>`);
  s += `<rect class="grid-major" width="1" height="108"/><rect class="grid-major" x="107" width="1" height="108"/>`;
  s += `<rect class="grid-major" width="108" height="1"/><rect class="grid-major" y="107" width="108" height="1"/></pattern>`;
  return s + `<rect x="275" y="131" width="4000" height="3000" fill="url(#grid)"/>`;
}

function banner() {
  return `<rect class="body" x="663" y="100" width="843" height="128"/>` +
    text("banner", 1087, 183, "HW2 - PART 2 - ASYNCHRONOUS") +
    `<rect class="banner-rule" x="728" y="188" width="718" height="4"/>`;
}

function led(cx, cy, ref, net) {
  return line("wire", cx - 54, cy, cx - 23, cy) + line("wire", cx + 22, cy, cx + 43, cy) +
    text("txt", cx - 32, cy - 2, "GND") + text("txt", cx + 32, cy - 2, net) +
    line("pin", cx - 23, cy, cx + 22, cy) +
    `<circle class="led" cx="${cx}" cy="${cy}" r="13"/>` +
    line("diode", cx - 13, cy, cx + 13, cy) +
    `<path class="diode" d="M${cx - 5} ${cy - 6}v12M${cx + 3} ${cy - 6}v12l-7 -6z"/>` +
    node(cx - 53, cy) + node(cx + 44, cy) +
    text("ref", cx - 14, cy - 16, ref) + text("txt", cx - 14, cy + 22, "LED-BLUE");
}

function switchRow(dx, y, ref, net, netX, closed) {
  const x = v => v + dx, r = y - 32;
  return line("wire", x(1290), y, x(1472), y) + line("pin", x(1472), y, x(1485), y) +
    line("wire", x(1528), y, x(1625), y) + line("pin", x(1515), y, x(1528), y) +
    line("wire", x(1355), r, x(1387), r) + line("pin", x(1387), r, x(1397), r) +
    line("pin", x(1431), r, x(1442), r) +
    line("wire", x(1442), r, x(1463), r, x(1463), y) +
    `<rect class="body" x="${x(1398)}" y="${r - 4}" width="32" height="8"/>` +
    text("ref", x(1398), r - 8, ref) + text("txt", x(1398), r + 14, "10k") +
    text("txt", x(1366), r - 2, "GND") + text("txt", netX, y - 2, net) + text("txt", x(1603), y - 2, "VCC") +
    (closed ? line("pin", x(1487), y - 1, x(1500), y - 3, x(1510), y - 3, x(1514), y - 1)
            : line("pin", x(1489), y - 1, x(1511), y - 14)) +
    `<rect class="contact" x="${x(1486)}" y="${y - 1}" width="3" height="3"/>` +
    `<rect class="contact" x="${x(1512)}" y="${y - 1}" width="3" height="3"/>` +
    [[1517, 1], [1527, -1]].map(([c, d]) => `<circle class="actuator" cx="${x(c)}.5" cy="${y - 9.500}" r="4.500"/>` +
      `<path class="arrow" d="M${x(c) - .5} ${y - 9.500 - 3 * d}h2v${2 * d}h2l-3 ${4 * d}l-3 ${-4 * d}h2z"/>`).join("") +
    node(x(1291), y) + node(x(1464), y) + node(x(1626), y) + node(x(1356), r);
}

const LEFT = [[0, 9, "RESET"], [2, 13, "XTAL1"], [3, 12, "XTAL2"],
  ...[0, 1, 2, 3, 4, 5, 6, 7].map(i => [5 + i, 40 - i, `PA${i}/ADC${i}`]),
  ...["PB0/T0/XCK", "PB1/T1", "PB2/AIN0/INT2", "PB3/AIN1/OC0", "PB4/SS", "PB5/MOSI", "PB6/MISO", "PB7/SCK"].map((n, i) => [14 + i, 1 + i, n])];
const RIGHT = [
  ...["PC0/SCL", "PC1/SDA", "PC2/TCK", "PC3/TMS", "PC4/TDO", "PC5/TDI", "PC6/TOSC1", "PC7/TOSC2"].map((n, i) => [i, 22 + i, n]),
  ...["PD0/RXD", "PD1/TXD", "PD2/INT0", "PD3/INT1", "PD4/OC1B", "PD5/OC1A", "PD6/ICP1", "PD7/OC2"].map((n, i) => [9 + i, 14 + i, n]),
  [20, 32, "AREF"], [21, 30, "AVCC"]];

function chip(ref, row, leftNets, rightNets) {
  const top = gridY(row - 1), bottom = gridY(row + 22);
  let s = `<rect class="body" x="793" y="${top}" width="194" height="${bottom - top}"/>` +
    text("ref", 792, top - 3, ref) + text("txt", 792, bottom + 10, "ATMEGA32");
  for (const [k, num, name] of LEFT) {
    const y = gridY(row + k);
    s += line("pin", 770, y, 793, y) + text("txt", 798, y + 4, name) + text("txt end", 783, y - 1, num);
    if (num === 9) s += line("bar", 798, y - 4.500, 829, y - 4.500);
    if (name === "PB4/SS") s += line("bar", 818, y - 4.500, 831, y - 4.500);
    if (leftNets[num]) s += line("wire", 750, y, 770, y) + text("txt", 762, y - 2, leftNets[num]) + node(751, y);
  }
  for (const [k, num, name] of RIGHT) {
    const y = gridY(row + k);
    s += line("pin", 987, y, 1009, y) + text("txt end", 983, y + 4, name) + text("txt", 999, y - 1, num);
    if (rightNets[num]) {
      const [net, len] = rightNets[num];
      s += line("wire", 1009, y, 1009 + len, y) + text("txt", 999 + len, y - 2, net) + node(1010 + len, y);
    }
  }
  return s;
}

const bNets = {}, cNets = { 15: ["U3 TO U4", 22], 32: ["GND", 22], 30: ["VCC", 22] };
for (let i = 1; i <= 8; i++) {
  bNets[i] = `B${i}${i}`;
  cNets[21 + i] = [`C${i}${i}`, 22];
}

const rows = [
  [0, 346, 1301, false], [10, 422, 1333, false], [0, 508, 1344, false], [10, 584, 1333, true],
  [10, 681, 1344, true], [10, 757, 1355, false], [21, 832, 1365, false], [10, 919, 1344, false]];

let out = grid() + banner();
for (let i = 0; i < 8; i++) out += led(631, 282 + 54 * i, `D${17 + i}`, `B${i + 1}${i + 1}`);
rows.forEach(([dx, y, netX, closed], i) => {
  const net = `C${i + 1}${i + 1}`;
  out += led(1214, y, `D${25 + i}`, net) + switchRow(dx, y, `R${9 + i}`, net, netX, closed);
});
out += chip("U4", -3, bNets, { 14: ["U3 TO U4", 32], 32: ["GND", 22], 30: ["VCC", 22] });
out += chip("U3", 24, {}, cNets);
document.getElementById("schematic").innerHTML = `<g transform="translate(${-PAN.x} ${-PAN.y})">${out}</g>`;

// Overview thumbnail
let mini = `<text class="mini-title" x="40" y="2">HW2 - PART 2 - ASYNCHRONOUS</text>` +
  `<path d="M39 3.500h111M33.500 0v7.500h128V0"/><rect class="view" x="15.500" y="7.500" width="200" height="84"/>` +
  `<rect x="41.500" y="20.500" width="37" height="28"/><rect x="41.500" y="53.500" width="37" height="27"/>` +
  `<path d="M82 32.500h13.500v34H82"/>` +
  `<path class="solid" d="M32 27h6v1h-6zM32 29h6v5h-6zM32 35h6v2h-6zM81 45h4v1h-4zM81 47h4v1h-4zM81 54h4v4h-4zM81 59h4v4h-4zM81 78h4v2h-4z"/>` +
  `<path class="solid" d="M211 80v-2h-2l2.500-3 2.500 3h-2v2zM211 85v2h-2l2.500 3 2.500-3h-2v-2z"/>`;
const miniLed = (x, y) => `<path d="M${x - 9} ${y}.5h5M${x - 3} ${y}.5h7M${x + 5} ${y}.5h4"/><rect class="solid" x="${x - 2}" y="${y - 1}" width="4" height="3"/>`;
for (let i = 0; i < 8; i++) mini += miniLed(11, 13 + 6 * i);
[20, 29, 38, 47, 57, 66, 74, 84].forEach((y, i) => {
  const x = 134 + (i === 6 ? 4 : rows[i][0] ? 2 : 0);
  mini += miniLed(119, y) + `<path d="M${x} ${y}.5h35M${x + 12} ${y - 3}.5h19v3M${x + 37} ${y - 1}.5h5M${x + 43} ${y}.5h18"/>` +
    `<rect class="solid" x="${x + 18}" y="${y - 4}" width="7" height="2"/>`;
});
document.getElementById("overview").innerHTML = `<g class="mini">${mini}</g>`;
```
